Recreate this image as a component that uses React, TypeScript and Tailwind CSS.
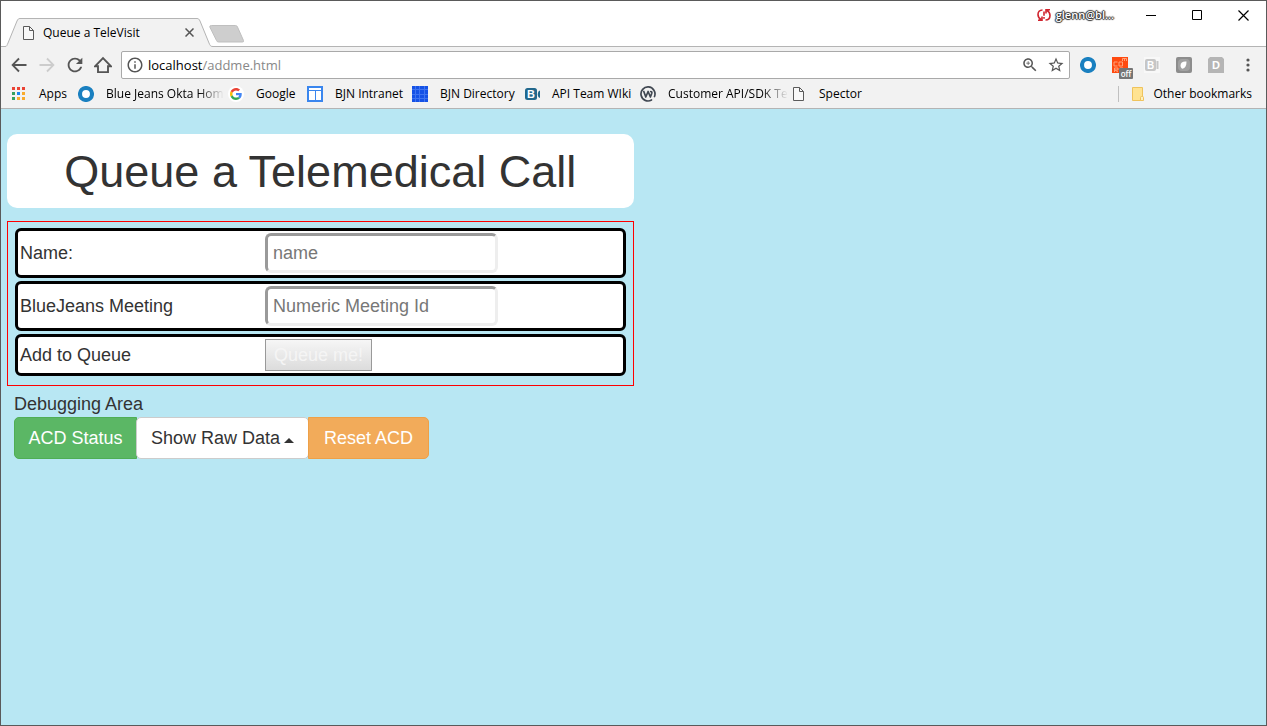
import type { ReactNode } from "react";

const uiFont = "font-['Open_Sans','Noto_Sans',sans-serif]";

function Material({ d, size = 20, className = "" }: { d: string; size?: number; className?: string }) {
  return (
    <svg width={size} height={size} viewBox="0 0 24 24" fill="currentColor" className={className} aria-hidden="true">
      <path d={d} />
    </svg>
  );
}

function PageIcon() {
  return (
    <svg width="16" height="16" viewBox="0 0 16 16" fill="none" stroke="#5a5a5a" aria-hidden="true" className="shrink-0">
      <path d="M2.500 1.500h6l4 4v9h-10z" fill="#f8f8f8" />
      <path d="M8.500 1.500v4h4" />
    </svg>
  );
}

function Ring({ size = 16 }: { size?: number }) {
  return (
    <svg width={size} height={size} viewBox="0 0 16 16" fill="none" aria-hidden="true" className="shrink-0">
      <circle cx="8" cy="8" r="6" fill="#fff" stroke="#1a80c0" strokeWidth="4.100" />
    </svg>
  );
}

function AppsIcon() {
  const colors = ["#ea4335", "#ea4335", "#ea4335", "#34a05f", "#1a86f0", "#f9ab2d", "#34a05f", "#f9ab2d", "#f9ab2d"];
  return (
    <svg width="15" height="16" viewBox="0 0 15 16" aria-hidden="true" className="shrink-0">
      {colors.map((c, i) => (
        <rect key={i} x={(i % 3) * 5} y={1 + Math.floor(i / 3) * 5} width="3" height="3" fill={c} />
      ))}
    </svg>
  );
}

function GoogleIcon() {
  return (
    <svg width="16" height="16" viewBox="0 0 16 16" aria-hidden="true" className="shrink-0">
      <circle cx="8" cy="8" r="8" fill="#fff" />
      <svg x="2" y="2" width="12" height="12" viewBox="0 0 48 48">
        <path fill="#EA4335" d="M24 9.5c3.54 0 6.71 1.22 9.21 3.6l6.85-6.85C35.9 2.38 30.47 0 24 0 14.62 0 6.51 5.38 2.56 13.22l7.98 6.19C12.43 13.72 17.74 9.5 24 9.5z" />
        <path fill="#4285F4" d="M46.98 24.55c0-1.57-.15-3.09-.38-4.55H24v9.02h12.94c-.58 2.96-2.26 5.48-4.78 7.18l7.73 6c4.51-4.18 7.09-10.36 7.09-17.65z" />
        <path fill="#FBBC05" d="M10.53 28.59c-.48-1.45-.76-2.99-.76-4.59s.27-3.14.76-4.59l-7.98-6.19C.92 16.46 0 20.12 0 24c0 3.88.92 7.54 2.56 10.78l7.97-6.19z" />
        <path fill="#34A853" d="M24 48c6.48 0 11.93-2.13 15.89-5.81l-7.73-6c-2.15 1.45-4.92 2.3-8.16 2.3-6.26 0-11.57-4.22-13.47-9.91l-7.98 6.19C6.51 42.62 14.62 48 24 48z" />
      </svg>
    </svg>
  );
}

function IntranetIcon() {
  return (
    <svg width="16" height="16" viewBox="0 0 16 16" aria-hidden="true" className="shrink-0">
      <rect width="16" height="16" fill="#3a86ee" />
      <path d="M2 2h12v2H2zM2 5h6v9H2zM9 5h5v9H9z" fill="#fff" />
    </svg>
  );
}

function DirectoryIcon() {
  return (
    <svg width="16" height="16" viewBox="0 0 16 16" aria-hidden="true" className="shrink-0">
      <rect width="16" height="16" fill="#1552e6" />
      <path d="M3.5 0v16M7.5 0v16M12.5 0v16M0 3.5h16M0 8.5h16M0 12.5h16" stroke="#3f74f0" />
    </svg>
  );
}

function BjnIcon() {
  return (
    <svg width="15" height="16" viewBox="0 0 15 16" aria-hidden="true" className="shrink-0">
      <rect x="0" y="2" width="12" height="12" rx="2.5" fill="#22688d" />
      <path d="M15 4.500v7.500c-1.600-.6-2.200-1.600-2.200-3.700s.6-3.200 2.200-3.800z" fill="#22688d" />
      <text x="2" y="12" fontSize="11" fontWeight="700" fontFamily="Liberation Sans" fill="#fff">B</text>
    </svg>
  );
}

function WorkplaceIcon() {
  return (
    <svg width="16" height="16" viewBox="0 0 16 16" fill="none" stroke="#414852" strokeWidth="1.700" strokeLinejoin="round" strokeLinecap="round" aria-hidden="true" className="shrink-0">
      <path d="M11.500 14A7 7 0 1 1 14.500 10.500" />
      <path d="M3.800 5.500l2 5.500 2.300-5.500 2.300 5.500 1.300-3.500c.4-1.300 0-2-1-2" />
    </svg>
  );
}

function FolderIcon() {
  return (
    <svg width="14" height="16" viewBox="0 0 14 16" fill="#ffe391" stroke="#efc35c" aria-hidden="true" className="shrink-0">
      <path d="M1.500 1.500h10v13h-10z" />
      <path d="M9.500 14.500v-3q0-1 1-1h1q1 0 1 1v3z" fill="#fff0bd" />
    </svg>
  );
}

function NavButton({ label, children, disabled }: { label: string; children: ReactNode; disabled?: boolean }) {
  return (
    <button type="button" aria-label={label} disabled={disabled} className="flex h-7 w-7 shrink-0 items-center justify-center text-[#555] disabled:text-[#ccc]">
      {children}
    </button>
  );
}

function ExtButton({ label, children }: { label: string; children: ReactNode }) {
  return (
    <button type="button" aria-label={label} className="relative flex h-7 w-8 shrink-0 items-center justify-center text-[#555]">
      {children}
    </button>
  );
}

const arrowBack = "M21 10.700H7L12.800 5 11.200 3.400 2.800 12l8.400 8.600 1.600-1.600L7 13.300h14z";

function Bookmark({ icon, label, width, fade }: { icon: ReactNode; label: string; width: string; fade?: boolean }) {
  return (
    <a href="#" className={`flex shrink-0 items-center gap-3 ${width}`}>
      {icon}
      <span className={fade ? "whitespace-nowrap [mask-image:linear-gradient(to_right,black_78%,transparent)]" : "whitespace-nowrap"}>{label}</span>
    </a>
  );
}

function TitleBar() {
  return (
    <header className="flex h-[46px] items-end justify-between border-b border-[#b4b4b4] bg-white pl-1">
      <div className="-mb-px flex items-end">
        <div className="relative flex h-[29px] w-[208px] items-center">
          <svg width="208" height="29" viewBox="0 0 208 29" className="absolute inset-0" aria-hidden="true">
            <path d="M0 28.500C2 28.500 2 27 3 25L12 3C13 1 13.500.5 15 .5H192C193.500.5 194 1 195 3L204 25C205 27.500 205.500 28.500 208 28.500V29H0z" fill="#f2f2f2" />
            <path d="M0 28.500C2 28.500 2 27 3 25L12 3C13 1 13.500.5 15 .5H192C193.500.5 194 1 195 3L204 25C205 27.500 205.500 28.500 208 28.500" fill="none" stroke="#b4b4b4" />
          </svg>
          <div className="relative flex w-full items-center pr-4 pl-4">
            <PageIcon />
            <span className="ml-[6px] flex-1 whitespace-nowrap">Queue a TeleVisit</span>
            <button type="button" aria-label="Close tab" className="flex h-4 w-4 items-center justify-center">
              <svg width="9" height="9" viewBox="0 0 9 9" stroke="#555" strokeWidth="1.500" aria-hidden="true">
                <path d="M.5.5l8 8M8.500.5l-8 8" />
              </svg>
            </button>
          </div>
        </div>
        <button type="button" aria-label="New tab" className="mb-1 -ml-1">
          <svg width="36" height="18" viewBox="0 0 36 18" aria-hidden="true">
            <path d="M2.500.5H26.500q1.500 0 2 1.500L34.500 15.500q.5 1.500-1 1.500H9.500Q8 17 7.500 15.500L.8 2Q.5.5 2.500.5z" fill="#cecece" stroke="#bfbfbf" />
          </svg>
        </button>
      </div>
      <div className="flex h-7 items-center self-start">
        <button type="button" className="mr-[14px] flex items-center gap-1 text-[11px] font-semibold text-white [text-shadow:0_0_1px_#333,1px_0_1px_#333,0_1px_1px_#333,-1px_0_1px_#333,0_-1px_1px_#333]">
          <svg width="16" height="14" viewBox="0 0 16 14" fill="none" stroke="#d0242e" strokeWidth="1.600" aria-hidden="true">
            <path d="M6.500 2C3.500 2 2 4.200 2 6.500S3.200 10.500 5 11.500M2 12.200h4V8.500M9.500 12C12.500 12 14 9.800 14 7.500S12.800 3.500 11 2.500M14 1.800h-4v3.700M8 3.500v4.200M8 9v1.700" />
          </svg>
          <span>glenn@bl...</span>
        </button>
        <button type="button" aria-label="Minimize" className="flex h-7 w-[46px] items-center justify-center">
          <svg width="10" height="10" viewBox="0 0 10 10" aria-hidden="true"><path d="M0 5.500h10" stroke="#000" /></svg>
        </button>
        <button type="button" aria-label="Maximize" className="flex h-7 w-[46px] items-center justify-center">
          <svg width="10" height="10" viewBox="0 0 10 10" aria-hidden="true"><path d="M.5.5h9v9h-9z" fill="none" stroke="#000" /></svg>
        </button>
        <button type="button" aria-label="Close" className="flex h-7 w-[46px] items-center justify-center">
          <svg width="11" height="11" viewBox="0 0 11 11" aria-hidden="true"><path d="M.5.5l10 10M10.500.5l-10 10" stroke="#000" strokeWidth="1.200" /></svg>
        </button>
      </div>
    </header>
  );
}

function Toolbar() {
  return (
    <div className="flex items-center pt-1 pr-[2px] pl-1">
      <NavButton label="Back"><Material size={20} d={arrowBack} /></NavButton>
      <NavButton label="Forward" disabled><Material size={20} d={arrowBack} className="rotate-180" /></NavButton>
      <NavButton label="Reload">
        <Material size={22} d="M17.650 6.350C16.200 4.900 14.210 4 12 4c-4.420 0-7.990 3.580-7.990 8s3.570 8 7.990 8c3.730 0 6.840-2.550 7.730-6h-2.080c-.82 2.330-3.040 4-5.650 4-3.310 0-6-2.690-6-6s2.690-6 6-6c1.660 0 3.140.69 4.220 1.780L13 11h7V4l-2.350 2.350z" />
      </NavButton>
      <NavButton label="Home">
        <svg width="18" height="18" viewBox="0 0 18 18" fill="none" stroke="currentColor" strokeWidth="1.900" aria-hidden="true">
          <path d="M1.200 10.200L9 2.200l7.800 8H14v5.900H4v-5.900z" />
        </svg>
      </NavButton>
      <div className="ml-1 flex h-7 flex-1 items-center rounded-[2px] border border-[#a9a9a9] bg-white px-1 text-[#555]">
        <Material size={18} d="M11 17h2v-6h-2v6zm1-15C6.480 2 2 6.480 2 12s4.480 10 10 10 10-4.480 10-10S17.520 2 12 2zm0 18c-4.410 0-8-3.590-8-8s3.590-8 8-8 8 3.590 8 8-3.590 8-8 8zM11 9h2V7h-2v2z" />
        <div role="textbox" aria-label="Address" className="ml-1 flex-1 text-[13px] text-[#888]">
          <span className="text-black">localhost</span>/addme.html
        </div>
        <button type="button" aria-label="Zoom" className="mr-2">
          <Material size={18} d="M15.500 14h-.79l-.28-.27C15.410 12.590 16 11.110 16 9.500 16 5.910 13.090 3 9.500 3S3 5.910 3 9.500 5.910 16 9.500 16c1.610 0 3.090-.59 4.230-1.570l.27.28v.79l5 4.990L20.490 19l-4.990-5zm-6 0C7.010 14 5 11.990 5 9.500S7.010 5 9.500 5 14 7.010 14 9.500 11.990 14 9.500 14zm2.500-4h-2v2H9v-2H7V9h2V7h1v2h2v1z" />
        </button>
        <button type="button" aria-label="Bookmark this page">
          <Material size={18} d="M22 9.240l-7.190-.62L12 2 9.190 8.630 2 9.240l5.460 4.730L5.820 21 12 17.270 18.180 21l-1.630-7.030L22 9.240zM12 15.400l-3.760 2.270 1-4.280-3.320-2.880 4.380-.38L12 6.100l1.710 4.040 4.380.38-3.320 2.880 1 4.280L12 15.400z" />
        </button>
      </div>
      <div className="ml-[2px] flex">
        <ExtButton label="BlueJeans extension"><Ring /></ExtButton>
        <ExtButton label="CORS extension">
          <svg width="16" height="16" viewBox="0 0 16 16" aria-hidden="true">
            <rect width="16" height="16" fill="#ff4a10" />
            <g fill="none" stroke="#ffac86" strokeWidth=".9">
              <path d="M5.500 5H2v4h3.500M7 5h3.500v4H7zM2.500 15v-4H6v2H3l3 2M8 15v-4h3M10.500 4V1.500h4V4M12.500 1.500V4" />
            </g>
          </svg>
          <span className="absolute right-[3px] bottom-0 flex h-[11px] w-[14px] items-center justify-center rounded-[1px] bg-[#757575] text-[8px] font-semibold text-white">off</span>
        </ExtButton>
        <ExtButton label="B extension">
          <svg width="16" height="16" viewBox="0 0 16 16" aria-hidden="true">
            <rect width="16" height="16" fill="#f8f8f8" />
            <rect x="1" y="2" width="11" height="12" rx="2" fill="#c6c6c6" />
            <path d="M13.500 4v8" stroke="#c6c6c6" strokeWidth="2" />
            <text x="3" y="12" fontSize="10" fontWeight="700" fontFamily="Liberation Sans" fill="#fff">B</text>
          </svg>
        </ExtButton>
        <ExtButton label="Leaf extension">
          <svg width="16" height="16" viewBox="0 0 16 16" aria-hidden="true">
            <rect width="16" height="16" rx="2" fill="#8d8d8d" />
            <rect x="2" y="2" width="12" height="12" rx="4" fill="#a2a2a2" />
            <path d="M10.500 4.500C7 4 4.500 5.500 4.500 8.500c0 2 1 3.200 2.300 3.200C9.500 11 10.500 8.500 10.500 4.500z" fill="#fff" />
          </svg>
        </ExtButton>
        <ExtButton label="D extension">
          <svg width="16" height="16" viewBox="0 0 16 16" aria-hidden="true">
            <path d="M2 0h12l2 2v14H0V2z" fill="#b5b5b5" />
            <text x="4" y="12" fontSize="11" fontWeight="700" fontFamily="Liberation Sans" fill="#fff">D</text>
          </svg>
        </ExtButton>
        <ExtButton label="Menu">
          <svg width="4" height="14" viewBox="0 0 4 14" fill="#555" aria-hidden="true">
            <circle cx="2" cy="2" r="1.600" /><circle cx="2" cy="7" r="1.600" /><circle cx="2" cy="12" r="1.600" />
          </svg>
        </ExtButton>
      </div>
    </div>
  );
}

function BookmarksBar() {
  return (
    <nav aria-label="Bookmarks" className="flex h-[30px] items-center border-b border-[#b4b4b4] pr-[14px] pl-[11px]">
      <Bookmark icon={<AppsIcon />} label="Apps" width="w-[66px]" />
      <Bookmark icon={<Ring />} label="Blue Jeans Okta Hom" width="w-[150px]" fade />
      <Bookmark icon={<GoogleIcon />} label="Google" width="w-[79px]" />
      <Bookmark icon={<IntranetIcon />} label="BJN Intranet" width="w-[105px]" />
      <Bookmark icon={<DirectoryIcon />} label="BJN Directory" width="w-[113px]" />
      <Bookmark icon={<BjnIcon />} label="API Team WIki" width="w-[115px]" />
      <Bookmark icon={<WorkplaceIcon />} label="Customer API/SDK Te" width="w-[151px]" fade />
      <Bookmark icon={<PageIcon />} label="Spector" width="w-[80px]" />
      <div className="ml-auto flex items-center">
        <span className="mr-3 h-4 w-px bg-[#c0c0c0]" />
        <a href="#" className="flex items-center gap-2"><FolderIcon /><span className="whitespace-nowrap">Other bookmarks</span></a>
      </div>
    </nav>
  );
}

const rowClass = "flex items-center rounded-[6px] border-[3px] border-black bg-white p-[2px]";
const labelClass = "w-[245px] shrink-0";
const inputClass = "h-10 w-[233px] rounded-[6px] border-[3px] border-t-[#9a9a9a] border-r-[#eee] border-b-[#eee] border-l-[#9a9a9a] bg-white px-[5px] placeholder:text-[#777]";
const groupButton = "flex h-[42px] items-center justify-center gap-1 border whitespace-nowrap";

function QueuePage() {
  return (
    <main className="flex-1 bg-[#b8e7f3] px-[6px] pt-[25px] font-['Liberation_Sans',Arial,sans-serif] text-[18px] leading-[26px] text-[#333]">
      <div className="w-1/2">
        <h1 className="rounded-[10px] bg-white pt-[13px] pb-[11px] text-center text-[45px] leading-[50px] whitespace-nowrap">Queue a Telemedical Call</h1>
        <form className="mt-[13px] flex flex-col gap-[3px] border border-[#f00] px-[7px] pt-[6px] pb-[9px]" onSubmit={(e) => e.preventDefault()}>
          <div className={rowClass}>
            <label htmlFor="name" className={labelClass}>Name:</label>
            <input id="name" type="text" placeholder="name" className={inputClass} />
          </div>
          <div className={rowClass}>
            <label htmlFor="meeting" className={labelClass}>BlueJeans Meeting</label>
            <input id="meeting" type="text" placeholder="Numeric Meeting Id" className={inputClass} />
          </div>
          <div className={rowClass}>
            <label htmlFor="queue" className={labelClass}>Add to Queue</label>
            <button id="queue" type="submit" className="h-8 w-[107px] border border-[#999] bg-linear-to-b from-[#f6f6f6] to-[#dcdcdc] whitespace-nowrap text-[#f5f5f5]">Queue me!</button>
          </div>
        </form>
        <section className="pt-[5px] pl-[7px]">
          <h2>Debugging Area</h2>
          <div className="flex">
            <button type="button" className={`${groupButton} w-[123px] rounded-l-[5px] border-[#4fae55] bg-[#5bb765] text-white`}>ACD Status</button>
            <button type="button" className={`${groupButton} -ml-px w-[173px] rounded-[5px] border-[#ccc] bg-white`}>
              Show Raw Data
              <svg width="10" height="5" viewBox="0 0 10 5" className="mt-1" aria-hidden="true"><path d="M0 5l5-5 5 5z" fill="#333" /></svg>
            </button>
            <button type="button" className={`${groupButton} -ml-px w-[121px] rounded-r-[5px] border-[#eea047] bg-[#f2ab5a] text-white`}>Reset ACD</button>
          </div>
        </section>
      </div>
    </main>
  );
}

export default function App() {
  return (
    <div className={`flex min-h-screen flex-col border border-[#5a5a5a] bg-[#f2f2f2] text-[12px] leading-4 text-black ${uiFont}`}>
      <TitleBar />
      <Toolbar />
      <BookmarksBar />
      <QueuePage />
    </div>
  );
}
